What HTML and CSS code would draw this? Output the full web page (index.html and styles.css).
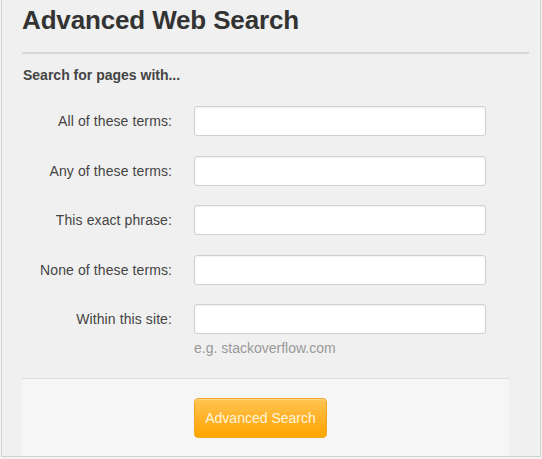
FILE: index.html
```html
<!DOCTYPE html>
<html>
<head>
<meta charset="utf-8">
<link rel="stylesheet" href="styles.css">
</head>
<body>
<div class="page">
  <h1 class="title">Advanced Web Search</h1>
  <div class="rule"></div>
  <h2 class="section">Search for pages with...</h2>
  <form class="form">
    <div class="grid">
      <label class="label" for="f1">All of these terms:</label>
      <input class="field" id="f1" type="text">
      <label class="label" for="f2">Any of these terms:</label>
      <input class="field" id="f2" type="text">
      <label class="label" for="f3">This exact phrase:</label>
      <input class="field" id="f3" type="text">
      <label class="label" for="f4">None of these terms:</label>
      <input class="field" id="f4" type="text">
      <label class="label" for="f5">Within this site:</label>
      <input class="field" id="f5" type="text">
    </div>
    <div class="hint">e.g. stackoverflow.com</div>
    <div class="footer">
      <button class="btn" type="button">Advanced Search</button>
    </div>
  </form>
</div>
</body>
</html>
```
FILE: styles.css
```css
html, body {
  margin: 0;
  padding: 0;
  background: #f3f3f3;
}
body {
  font-family: "Liberation Sans", Arial, sans-serif;
  color: #444;
}
.page {
  margin: 0 1px;
  height: 457px;
  box-sizing: border-box;
  border: 1px solid #d2d2d2;
  border-top: 0;
  background: #f0f0f0;
  padding: 4px 11px 0 20px;
}
.title {
  margin: 0;
  font-size: 26px;
  line-height: 32px;
  font-weight: bold;
  letter-spacing: -0.15px;
  color: #333;
}
.rule {
  margin-top: 16px;
  height: 2px;
  background: #d8d8d8;
}
.section {
  margin: 12px 0 0 1px;
  font-size: 14px;
  line-height: 18px;
  font-weight: bold;
  color: #444;
}
.form {
  margin: 22px 0 0;
}
.grid {
  display: grid;
  grid-template-columns: 150px 292px;
  column-gap: 22px;
  row-gap: 19.5px;
  align-items: center;
}
.label {
  text-align: right;
  font-size: 14px;
  line-height: 18px;
  letter-spacing: 0.1px;
  color: #444;
}
.field {
  box-sizing: border-box;
  width: 292px;
  height: 30px;
  margin: 0;
  padding: 4px 6px;
  border: 1px solid #cfcfcf;
  border-radius: 3px;
  background: #fff;
  box-shadow: inset 0 1px 2px rgba(0,0,0,0.06);
  font: 14px "Liberation Sans", Arial, sans-serif;
}
.hint {
  margin: 5px 0 0 172px;
  font-size: 14px;
  line-height: 18px;
  color: #999;
}
.footer {
  margin: 21px 20px 0 0;
  border-top: 1px solid #dedede;
  background: #f6f6f6;
  height: 78px;
  padding: 19px 0 0 172px;
  box-sizing: border-box;
}
.btn {
  width: 133px;
  height: 40px;
  margin: 0;
  padding: 0;
  border: 1px solid #f2a623;
  border-radius: 4px;
  background: linear-gradient(to bottom, #ffc552 0%, #ffb229 50%, #ffa600 100%);
  box-shadow: inset 0 1px 0 rgba(255,255,255,0.3);
  color: #fff5dc;
  font: 14px "Liberation Sans", Arial, sans-serif;
  cursor: pointer;
}
```
